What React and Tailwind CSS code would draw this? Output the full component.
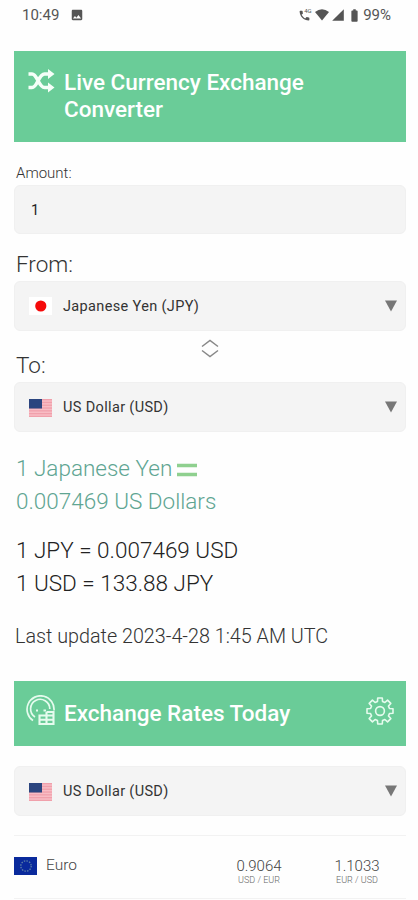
import React, { useState } from "react";
import { MdBatteryFull, MdImage, MdPhone, MdSignalCellular4Bar } from "react-icons/md";

const rates = [
  { code: 'EUR', name: 'Euro', rate: '0.9064', inverse: '1.1033' },
];

// Outline of an eight-toothed cog, centred on 0,0
const gearPath = (() => {
  const points = [];
  for (let i = 0; i < 8; i++) {
    const a = i * 45 - 90;
    [[-15, 9.8], [-10, 13.2], [10, 13.2], [15, 9.8]].forEach(([offset, r]) => {
      const rad = ((a + offset) * Math.PI) / 180;
      points.push(`${(r * Math.cos(rad)).toFixed(2)} ${(r * Math.sin(rad)).toFixed(2)}`);
    });
  }
  return `M${points.join('L')}Z`;
})();

function FlagUS() {
  return (
    <svg width="23" height="18" viewBox="0 0 23 18" className="mt-px shrink-0">
      <rect width="23" height="18" fill="#f8bcc4" />
      {[0, 2.8, 5.6, 8.4, 11.2, 14, 16.8].map(y => (
        <rect key={y} y={y} width="23" height="1.3" fill="#f0a0ab" />
      ))}
      <rect width="13" height="9.5" fill="#2b457f" />
    </svg>
  );
}

function FlagJP() {
  return (
    <svg width="23" height="18" viewBox="0 0 23 18" className="shrink-0">
      <rect width="23" height="18" fill="#fff" />
      <circle cx="11.8" cy="9" r="5.6" fill="#f50a0a" />
    </svg>
  );
}

function FlagEU() {
  return (
    <svg width="23" height="18" viewBox="0 0 23 18" className="shrink-0">
      <rect width="23" height="18" fill="#0a2a9c" />
      <circle cx="12" cy="9" r="5.2" fill="none" stroke="#5f83a8" strokeWidth="1.3" strokeDasharray="1.5 1.2" />
    </svg>
  );
}

function CurrencySelect({ flag, label }) {
  return (
    <button className="w-full h-[50px] flex items-center rounded-md border border-[#f0f0f0] bg-[#f4f4f4] pl-[14px] pr-[8px]">
      {flag}
      <span className="ml-[11px] mt-[2px] text-[14.5px] tracking-[0.35px] text-[#333]">{label}</span>
      <svg width="12" height="12" viewBox="0 0 12 12" className="ml-auto">
        <path d="M0 0.5h12L6 11.5z" fill="#777" />
      </svg>
    </button>
  );
}

function StatusBar() {
  return (
    <div className="h-[30px] flex items-center pl-[8px] pr-[15px] text-[15px] text-[#555]">
      <span>10:49</span>
      <MdImage className="ml-[11px] w-[14px] h-[14px]" />
      <div className="ml-auto flex items-center">
        <div className="relative w-[16px] h-[14px]">
          <MdPhone className="absolute left-0 top-[1px] w-[13px] h-[13px]" />
          <span className="absolute left-[6px] top-0 text-[6px] leading-[6px]">4G</span>
        </div>
        <svg width="14" height="12" viewBox="0 0 14 12" className="ml-px">
          <path d="M0 3Q7-2.5 14 3L7 11.5z" fill="#555" />
        </svg>
        <MdSignalCellular4Bar className="ml-[2px] w-[14px] h-[14px]" />
        <MdBatteryFull className="ml-[2px] w-[15px] h-[15px]" />
        <span className="ml-px mt-px text-[15px]">99%</span>
      </div>
    </div>
  );
}

export default function App() {
  const [amount, setAmount] = useState('1');

  return (
    <div className="w-[418px] h-[900px] overflow-hidden bg-[#fefefe] pl-[14px] pr-[12px] font-['Roboto',sans-serif]">
      <StatusBar />

      {/* Converter */}
      <header className="mt-[21px] h-[91px] flex bg-[#6acc98] pl-[14px] pt-[18px] text-white">
        <svg width="27" height="24" viewBox="0 0 27 24" fill="none" stroke="#f6fff9" strokeWidth="3.5">
          <path d="M0.5 5h3.5c5.500 0 6.500 13.500 12.500 13.500h4.500M0.500 18.500h3.500c5.500 0 6.500-13.500 12.500-13.500h4.500" />
          <path d="M20 0l6.500 5-6.500 5zM20 13.500l6.500 5-6.500 5z" fill="#f6fff9" stroke="none" />
        </svg>
        <h1 className="ml-[9px] text-[22.5px] leading-[27px] font-medium">
          Live Currency Exchange<br />Converter
        </h1>
      </header>

      <label className="mt-[20px] h-[23px] flex items-center pl-[2px] text-[15px] font-light text-[#333]">Amount:</label>
      <input
        value={amount}
        onChange={(e) => setAmount(e.target.value)}
        className="block w-full h-[49px] rounded-md border border-[#f0f0f0] bg-[#f4f4f4] pl-[16px] pt-px text-[14.5px] text-[#222] outline-none"
      />

      <div className="mt-[15px] h-[32px] flex items-center pl-[2px] text-[22.5px] font-light text-[#333]">From:</div>
      <CurrencySelect flag={<FlagJP />} label="Japanese Yen (JPY)" />
      <div className="mt-[8px] h-[43px] grid grid-cols-[1fr_18px_1fr]">
        <span className="self-end pl-[2px] text-[22.5px] leading-[33px] font-light text-[#333]">To:</span>
        <svg width="18" height="19" viewBox="0 0 18 19" fill="none" stroke="#888" strokeWidth="1.5">
          <path d="M1 7.500L9 1.500l8 6M1 11.500l8 6 8-6" />
        </svg>
      </div>
      <CurrencySelect flag={<FlagUS />} label="US Dollar (USD)" />

      <div className="mt-[20px] pl-[2px] text-[22.5px] leading-[33px] font-light text-[#5fa592]">
        <div className="flex items-center">
          1 Japanese Yen
          <svg width="20" height="14" viewBox="0 0 20 14" className="ml-[5px] mt-[3px]">
            <path d="M0 2.500h20M0 11.500h20" stroke="#8fd08f" strokeWidth="3.500" />
          </svg>
        </div>
        <div>0.007469 US Dollars</div>
      </div>
      <div className="mt-[16px] pl-[2px] text-[22.5px] leading-[33px] font-light text-[#222]">
        <div>1 JPY = 0.007469 USD</div>
        <div>1 USD = 133.88 JPY</div>
      </div>
      <div className="mt-[23px] h-[28px] flex items-center pl-[1px] text-[19.75px] font-light text-[#333]">
        Last update 2023-4-28 1:45 AM UTC
      </div>

      {/* Rates */}
      <header className="mt-[30px] h-[65px] flex items-center bg-[#6acc98] pl-[12px] pr-[12px] text-white">
        <svg width="30" height="31" viewBox="0 0 30 31" fill="none" stroke="#e6fbee" strokeWidth="1.7" className="-mt-[7px]">
          <path d="M7 25.5A13.5 13.5 0 1 1 28 15.500" />
          <path d="M9 22A9.600 9.600 0 1 1 23.800 14" />
          <path d="M10 15.500h2M17.500 15.500h2.500" strokeWidth="2" />
          <path d="M13.500 20.500h14v8.500h-14zM20.500 17h7v3.500M20.500 17v12M13.500 24.700h14" strokeWidth="2.100" />
        </svg>
        <h2 className="ml-[8px] text-[22.5px] font-medium">Exchange Rates Today</h2>
        <svg width="28" height="28" viewBox="-14 -14 28 28" fill="none" stroke="#e6fbee" strokeWidth="1.6" strokeLinejoin="round" className="-mt-[6px] ml-auto">
          <path d={gearPath} />
          <circle r="4.4" />
        </svg>
      </header>
      <div className="mt-[20px]">
        <CurrencySelect flag={<FlagUS />} label="US Dollar (USD)" />
      </div>

      <div className="mt-[19px]">
        {rates.map(item => (
          <div key={item.code} className="h-[64px] grid grid-cols-[196px_98px_98px] items-center border-y border-[#f2f2f2]">
            <div className="-mt-[2px] flex items-center">
              <FlagEU />
              <span className="ml-[9px] text-[15.5px] font-light text-[#444]">{item.name}</span>
            </div>
            <div className="mt-[9px] text-center font-light text-[#444]">
              <div className="text-[15px] leading-[18px]">{item.rate}</div>
              <div className="text-[9px] leading-[11px] text-[#666]">USD / {item.code}</div>
            </div>
            <div className="mt-[9px] text-center font-light text-[#444]">
              <div className="text-[15px] leading-[18px]">{item.inverse}</div>
              <div className="text-[9px] leading-[11px] text-[#666]">{item.code} / USD</div>
            </div>
          </div>
        ))}
      </div>
    </div>
  );
}
